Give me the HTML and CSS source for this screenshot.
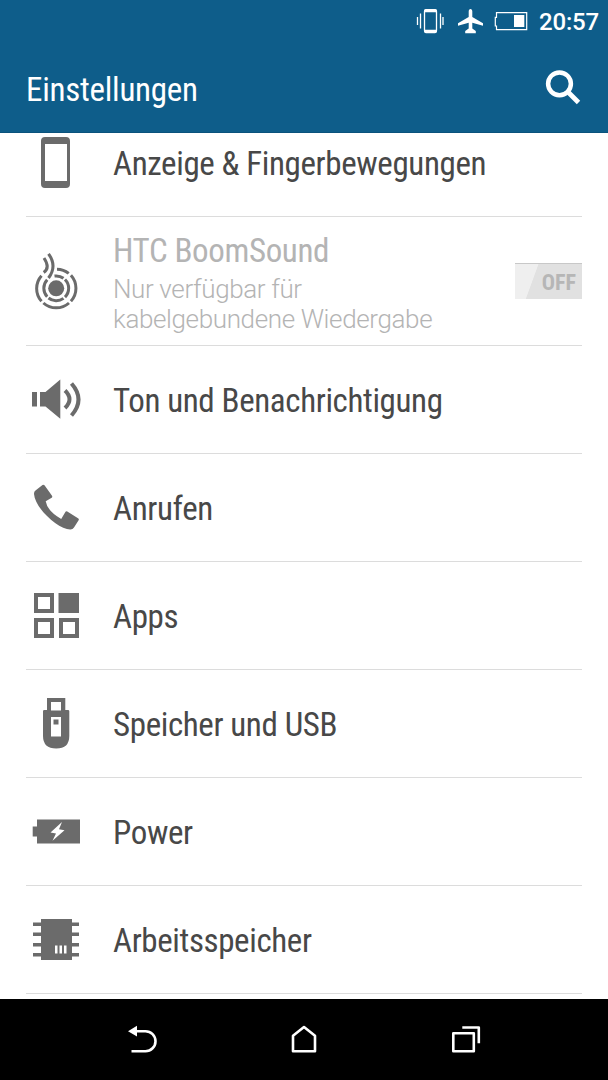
FILE: index.html
```html
<!DOCTYPE html>
<html lang="de">
<head>
<meta charset="utf-8">
<title>Einstellungen</title>
<link rel="stylesheet" href="styles.css">
</head>
<body>
<div class="phone">
  <header class="top">
    <div class="status">
      <svg class="status-icons" width="132" height="43" viewBox="400 0 132 43">
        <g fill="none" stroke="#fff">
          <path d="M417.5 17v8M420.5 13.500v15M440.500 13.500v15M443 17v8" stroke-width="1.300"/>
          <rect x="424.500" y="10" width="12" height="22" rx="1.500" stroke-width="1.300"/>
          <path d="M496.500 12.600h30.200v17h-30.200v-3.600h-1.200v-8.600h1.200z" stroke-width="1.200"/>
        </g>
        <path d="M424 12.300v-1.300q0-2 2-2h9q2 0 2 2v1.300zM424 29.700v1.500q0 2 2 2h9q2 0 2-2v-1.500z" fill="#fff"/>
        <path d="M470.500 9c1.100 0 1.800 1 1.800 2.400v5.600l10.700 6.300v2.400l-10.700-2.900v5.600l3.500 2.600v2.200h-10.600V31l3.500-2.600v-5.600L458 25.700v-2.400l10.700-6.300v-5.600c0-1.400.7-2.400 1.800-2.400z" fill="#fff"/>
        <rect x="514" y="15" width="10.300" height="12" fill="#fff"/>
      </svg>
      <span class="clock">20:57</span>
    </div>
    <div class="titlebar">
      <h1 class="title">Einstellungen</h1>
      <svg width="38" height="38" viewBox="545 69 38 38" fill="none" stroke="#fff"><circle cx="559.500" cy="83.800" r="11.400" stroke-width="4.500"/><path d="M567.500 91.500L578.500 102.500" stroke-width="4.800"/></svg>
    </div>
  </header>
  <main class="list">
    <div class="row row-first">
      <svg class="icon" width="60" height="83" viewBox="26 133 60 83"><path fill="#6b6b6b" fill-rule="evenodd" d="M45 137h21q4 0 4 4v43q0 4-4 4H45q-4 0-4-4v-43q0-4 4-4zM45 144v37h22v-37z"/></svg>
      <span class="label">Anzeige &amp; Fingerbewegungen</span>
    </div>
    <div class="row row-sound">
      <svg class="icon" width="60" height="128" viewBox="26 217 60 128" fill="none" stroke="#6b6b6b" stroke-width="3">
        <circle cx="56.200" cy="288.300" r="8" fill="#6b6b6b" stroke="none"/>
        <path d="M65 279.500A12.400 12.400 0 0 1 65 297.100M63.500 298.400A12.400 12.400 0 0 1 48.500 298M47.200 296.800A12.400 12.400 0 0 1 47.200 279.800M54.500 276A12.400 12.400 0 0 1 63.500 278.300"/>
        <path d="M70.900 275.300A19.300 19.300 0 0 1 70.900 301.300M69 303A19.300 19.300 0 0 1 43.400 303M41.500 301.300A19.300 19.300 0 0 1 41.500 275.700M57 269.200A19.300 19.300 0 0 1 68.700 273.400"/>
        <path d="M44 258Q50.500 268 43.700 272.500M48.500 253.800Q57.500 266 48.500 278"/>
      </svg>
      <div class="text">
        <span class="label">HTC BoomSound</span>
        <p class="note">Nur verfügbar für<br>kabelgebundene Wiedergabe</p>
      </div>
      <span class="switch"><span class="off">OFF</span></span>
    </div>
    <div class="row">
      <svg class="icon" width="60" height="107" viewBox="26 346 60 107"><path fill="#6b6b6b" d="M32 392h5v14.500h-5zM40 392h5.500L60.300 379.500v39.200L45.500 406.500H40z"/><path d="M65 390.500Q74 399.200 65 408M71.500 383.500Q85.500 399.500 71.500 415.500" fill="none" stroke="#6b6b6b" stroke-width="4"/></svg>
      <span class="label">Ton und Benachrichtigung</span>
    </div>
    <div class="row">
      <svg class="icon" width="60" height="107" viewBox="26 454 60 107"><path fill="#6b6b6b" d="M42.500 485q1-.8 2 .3l7.500 10.500q.7 1.200-.3 1.900l-6 3.600q1.500 9.500 15.500 17.700l4-6.800q.8-1.500 2.100-.7l10.700 6.700q1.300.8.600 2l-4.600 7.300q-1.200 2-3.600 2c-11.500.2-35.400-21-36.400-35.500q-.1-2.300 1.500-3.500z"/></svg>
      <span class="label">Anrufen</span>
    </div>
    <div class="row">
      <svg class="icon" width="60" height="107" viewBox="26 562 60 107"><path fill="none" stroke="#6b6b6b" stroke-width="4" d="M36 595h16v16H36zM36 620h16v16H36zM61 620h16v16H61z"/><path fill="#6b6b6b" d="M58.500 593H79v20H58.500z"/></svg>
      <span class="label">Apps</span>
    </div>
    <div class="row">
      <svg class="icon" width="60" height="107" viewBox="26 670 60 107"><path fill="#6b6b6b" fill-rule="evenodd" d="M47 698h18.300v12H68q1.300 0 1.300 1.300V736q0 12.500-13.100 12.500T43 736v-24.700q0-1.300 1.300-1.300H47zM51 702v8.500h10V702zM51 717v19.500h10V717z"/><path fill="#6b6b6b" d="M53.500 719.500h5v5h-5z"/></svg>
      <span class="label">Speicher und USB</span>
    </div>
    <div class="row">
      <svg class="icon" width="60" height="107" viewBox="26 778 60 107"><path fill="#6b6b6b" d="M37 819.500h43v24H37v-7h-4.300v-10H37z"/><path fill="#fff" d="M62 822l-11.500 10.500 5.500 1-3.500 7.300 12-10.500-5.500-1z"/></svg>
      <span class="label">Power</span>
    </div>
    <div class="row">
      <svg class="icon" width="60" height="107" viewBox="26 886 60 107"><path fill="#6b6b6b" d="M41 919h31v41H41zM33 922.500h46v3.500H33zM33 932.500h46v3.500H33zM33 943h46v3.500H33zM33 953h46v3.500H33z"/><path fill="#fff" d="M55 945.500h2.500v8H55zM59.500 945.500H62v8h-2.500zM64 945.500h2.500v8H64z"/></svg>
      <span class="label">Arbeitsspeicher</span>
    </div>
  </main>
  <nav class="nav">
    <svg width="608" height="81" viewBox="0 999 608 81" fill="none" stroke="#fff" stroke-width="2.600">
      <path d="M134 1031.200h11.500a10 10 0 0 1 0 20H131.500"/><path d="M128 1031.200l9-5.400v10.800z" fill="#fff" stroke="none"/>
      <path d="M293 1051.200v-15.500l11-8.700 11 8.700v15.500z" stroke-linejoin="round"/>
      <path d="M453.300 1033.300h20.500v18h-20.500zM462.300 1027.500h16.500v15.700" stroke-linejoin="round"/>
    </svg>
  </nav>
</div>
</body>
</html>
```
FILE: styles.css
```css
* { box-sizing: border-box; }
body { margin: 0; font-family: "Roboto Condensed", Roboto, sans-serif; font-stretch: 75%; }
.phone { display: flex; flex-direction: column; width: 608px; height: 1080px; overflow: hidden; background: #fff; }
.top { flex: none; height: 133px; background: #0e5d8a; color: #fff; border-bottom: 1px solid #0a527c; }
.status { display: flex; justify-content: flex-end; height: 43px; padding-right: 9px; }
.status-icons { flex: none; margin-right: 7px; }
.clock { width: 60px; font: 500 24px/44px Roboto, sans-serif; font-stretch: 100%; letter-spacing: -0.2px; white-space: nowrap; }
.titlebar { display: flex; justify-content: space-between; padding: 26px 25px 0 26px; }
.title { margin: 1px 0 0; font-size: 33px; font-weight: 400; line-height: 40px; letter-spacing: -0.25px; }
.list { flex: none; height: 866px; padding: 0 26px; overflow: hidden; color: #484848; }
.row { display: flex; height: 108px; border-bottom: 1px solid #dcdcdc; }
.icon { flex: none; display: block; margin-right: 27px; }
.label { display: block; font-size: 33px; line-height: 38px; padding-top: 36px; letter-spacing: -0.38px; white-space: nowrap; }
.row-first { height: 84px; }
.row-first .label { padding-top: 12px; }
.row-sound { height: 129px; color: #b4b4b4; }
.row-sound .label { padding-top: 15px; }
.text { flex: 1; }
.note { margin: 4px 0 0; font: 300 26px/30px Roboto, sans-serif; font-stretch: 100%; letter-spacing: -0.37px; white-space: nowrap; }
.switch { display: flex; justify-content: flex-end; width: 67px; height: 36px; margin-top: 46px; padding-right: 6px; border-top: 1px solid #c8c8c8; background: linear-gradient(110deg, #efefef 29%, #e1e1e1 30%); }
.off { font-size: 22px; font-weight: 700; line-height: 37px; color: #b6b6b6; }
.nav { flex: none; height: 81px; background: #000; }
.nav svg { display: block; }
```
